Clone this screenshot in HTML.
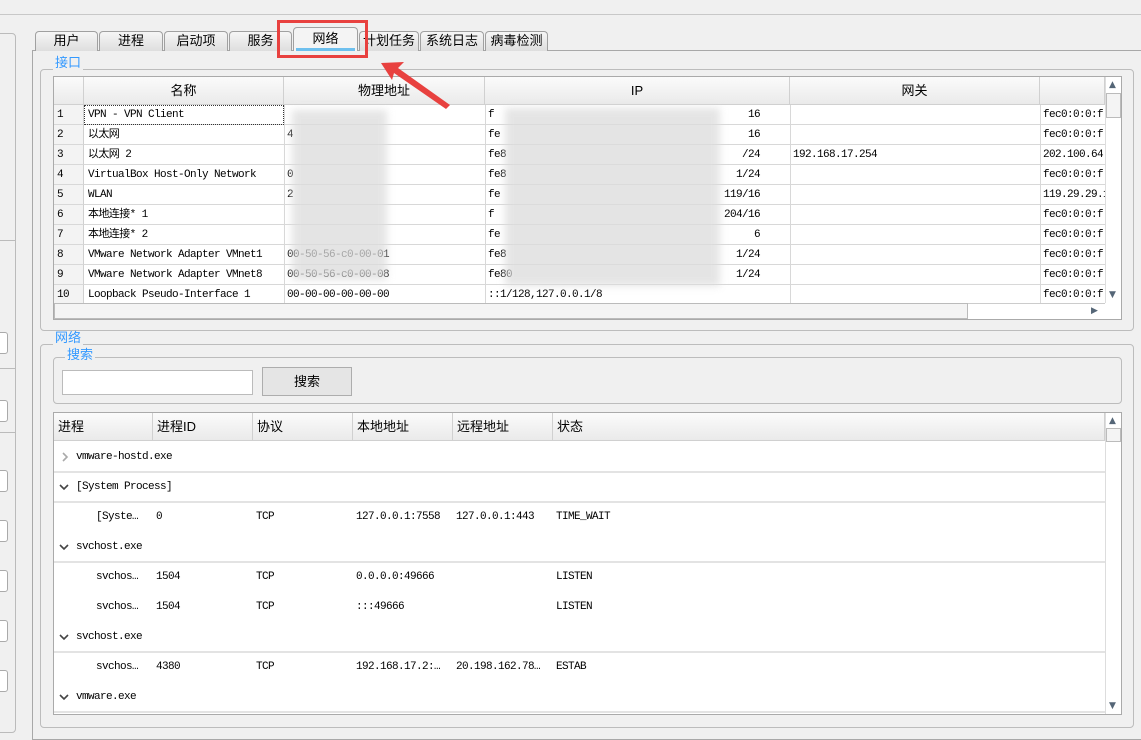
<!DOCTYPE html>
<html><head><meta charset="utf-8"><style>
*{box-sizing:border-box;margin:0;padding:0}
body{width:1141px;height:730px;background:#f0f0f0;position:relative;overflow:hidden;font-family:"Liberation Mono","Noto Sans CJK SC",monospace;font-size:12px;color:#000}
.a{position:absolute}
.t{font-family:"Liberation Sans","Noto Sans CJK SC",sans-serif;font-size:13px}
.m{font-family:"Liberation Mono","Noto Sans CJK SC",monospace;font-size:11px;letter-spacing:-0.6px;white-space:nowrap;line-height:20px;height:20px}
.tab{position:absolute;top:31px;height:20px;border:1px solid #a0a0a0;border-bottom:none;border-radius:4px 4px 0 0;background:linear-gradient(#f6f6f6,#dedede);text-align:center;line-height:18px}
.grp{position:absolute;border:1px solid #bcbcbc;border-radius:4px}
.gt{position:absolute;background:#f0f0f0;color:#3399ff;padding:0 2px;line-height:14px}
.hd{position:absolute;background:linear-gradient(#fbfbfb,#eaeaea);border-right:1px solid #d0d0d0;border-bottom:1px solid #d0d0d0;text-align:center;line-height:28px}
.bl{position:absolute;background:#dcdcdc;filter:blur(4px);opacity:.75}
.sa{position:absolute;font-size:9px;color:#567;line-height:10px;font-family:"DejaVu Sans",sans-serif}
</style></head><body>
<div class="a" style="left:0;top:14px;width:1141px;height:1px;background:#c8c8c8"></div>
<div class="a" style="left:-6px;top:33px;width:22px;height:700px;border:1px solid #bbb;border-radius:4px"></div>
<div class="a" style="left:0;top:240px;width:16px;height:1px;background:#bbb"></div>
<div class="a" style="left:0;top:368px;width:16px;height:1px;background:#bbb"></div>
<div class="a" style="left:0;top:432px;width:16px;height:1px;background:#bbb"></div>
<div class="a" style="left:-6px;top:332px;width:14px;height:22px;border:1px solid #aaa;border-radius:3px;background:#fff"></div>
<div class="a" style="left:-6px;top:400px;width:14px;height:22px;border:1px solid #aaa;border-radius:3px;background:#fff"></div>
<div class="a" style="left:-6px;top:470px;width:14px;height:22px;border:1px solid #aaa;border-radius:3px;background:#fff"></div>
<div class="a" style="left:-6px;top:520px;width:14px;height:22px;border:1px solid #aaa;border-radius:3px;background:#fff"></div>
<div class="a" style="left:-6px;top:570px;width:14px;height:22px;border:1px solid #aaa;border-radius:3px;background:#fff"></div>
<div class="a" style="left:-6px;top:620px;width:14px;height:22px;border:1px solid #aaa;border-radius:3px;background:#fff"></div>
<div class="a" style="left:-6px;top:670px;width:14px;height:22px;border:1px solid #aaa;border-radius:3px;background:#fff"></div>

<div class="a" style="left:32px;top:50px;width:1120px;height:690px;border:1px solid #a8a8a8;background:#f0f0f0"></div>
<div class="tab t" style="left:35px;width:63px">用户</div>
<div class="tab t" style="left:99px;width:64px">进程</div>
<div class="tab t" style="left:164px;width:64px">启动项</div>
<div class="tab t" style="left:229px;width:63px">服务</div>
<div class="tab t" style="left:293px;top:27px;height:24px;width:65px;background:#f4f4f4;line-height:22px">网络<div class="a" style="left:2px;right:2px;bottom:0;height:3px;background:#6ec0ee"></div></div>
<div class="tab t" style="left:359px;width:60px">计划任务</div>
<div class="tab t" style="left:420px;width:64px">系统日志</div>
<div class="tab t" style="left:485px;width:63px">病毒检测</div>

<div class="grp" style="left:40px;top:69px;width:1094px;height:262px"></div>
<div class="gt t" style="left:53px;top:56px">接口</div>
<div class="a" style="left:53px;top:76px;width:1069px;height:244px;border:1px solid #aaa;background:#fff"></div>
<div class="hd" style="left:54px;top:77px;width:30px;height:28px"></div>
<div class="hd t" style="left:84px;top:77px;width:200px;height:28px">名称</div>
<div class="hd t" style="left:284px;top:77px;width:201px;height:28px">物理地址</div>
<div class="hd t" style="left:485px;top:77px;width:305px;height:28px">IP</div>
<div class="hd t" style="left:790px;top:77px;width:250px;height:28px">网关</div>
<div class="hd" style="left:1040px;top:77px;width:65px;height:28px"></div>
<div id="rows"></div>
<div class="bl" style="left:292px;top:110px;width:95px;height:170px"></div>
<div class="bl" style="left:505px;top:108px;width:215px;height:178px"></div>
<div class="a" style="left:1105px;top:77px;width:16px;height:226px;background:#fff;border-left:1px solid #ddd"></div>
<div class="a" style="left:1106px;top:93px;width:15px;height:25px;border:1px solid #bbb;background:#f4f4f4"></div>
<div class="sa" style="left:1109px;top:80px">▲</div>
<div class="sa" style="left:1109px;top:290px">▼</div>
<div class="a" style="left:54px;top:303px;width:1051px;height:16px;background:#fff;border-top:1px solid #ccc"></div>
<div class="a" style="left:54px;top:303px;width:914px;height:16px;border:1px solid #bbb;background:#f4f4f4"></div>
<div class="sa" style="left:1091px;top:306px">▶</div>

<div class="grp" style="left:40px;top:344px;width:1094px;height:384px"></div>
<div class="gt t" style="left:53px;top:331px">网络</div>
<div class="grp" style="left:53px;top:357px;width:1069px;height:47px"></div>
<div class="gt t" style="left:65px;top:348px">搜索</div>
<div class="a" style="left:62px;top:370px;width:191px;height:25px;border:1px solid #bbb;background:#fff"></div>
<div class="a t" style="left:262px;top:367px;width:90px;height:29px;border:1px solid #adadad;background:#e5e5e5;text-align:center;line-height:27px">搜索</div>

<div class="a" style="left:53px;top:412px;width:1069px;height:303px;border:1px solid #aaa;background:#fff"></div>
<div class="hd t" style="left:54px;top:413px;width:99px;height:28px;text-align:left;padding-left:4px">进程</div>
<div class="hd t" style="left:153px;top:413px;width:100px;height:28px;text-align:left;padding-left:4px">进程ID</div>
<div class="hd t" style="left:253px;top:413px;width:100px;height:28px;text-align:left;padding-left:4px">协议</div>
<div class="hd t" style="left:353px;top:413px;width:100px;height:28px;text-align:left;padding-left:4px">本地地址</div>
<div class="hd t" style="left:453px;top:413px;width:100px;height:28px;text-align:left;padding-left:4px">远程地址</div>
<div class="hd t" style="left:553px;top:413px;width:552px;height:28px;text-align:left;padding-left:4px">状态</div>
<div class="a" style="left:1105px;top:413px;width:16px;height:301px;background:#fff;border-left:1px solid #ddd"></div>
<div class="a" style="left:1106px;top:428px;width:15px;height:14px;border:1px solid #bbb;background:#f4f4f4"></div>
<div class="sa" style="left:1109px;top:416px">▲</div>
<div class="sa" style="left:1109px;top:701px">▼</div>
<div id="tree"></div>

<div class="a" style="left:277px;top:20px;width:91px;height:38px;border:3px solid #e8413f;z-index:5"></div>
<svg class="a" style="left:370px;top:55px;z-index:5" width="85" height="55"><polygon points="11,8 34,7 28,13 80,50 76,54 24,18 22,25" fill="#e8413f"/></svg>
<script>
var r=[["1","VPN - VPN Client","","f","16","","fec0:0:0:f"],["2","以太网","4","fe","16","","fec0:0:0:f"],["3","以太网 2","","fe8","/24","192.168.17.254","202.100.64"],["4","VirtualBox Host-Only Network","0","fe8","1/24","","fec0:0:0:f"],["5","WLAN","2","fe","119/16","","119.29.29.1"],["6","本地连接* 1","","f","204/16","","fec0:0:0:f"],["7","本地连接* 2","","fe","6","","fec0:0:0:f"],["8","VMware Network Adapter VMnet1","00-50-56-c0-00-01","fe8","1/24","","fec0:0:0:f"],["9","VMware Network Adapter VMnet8","00-50-56-c0-00-08","fe80","1/24","","fec0:0:0:f"],["10","Loopback Pseudo-Interface 1","00-00-00-00-00-00","::1/128,127.0.0.1/8","","","fec0:0:0:f"]];
var h="";
r.forEach(function(x,i){var y=105+i*20;
h+='<div class="a" style="left:54px;top:'+y+'px;width:30px;height:20px;background:#f3f3f3;border-right:1px solid #d0d0d0;border-bottom:1px solid #d8d8d8"></div>';
h+='<div class="a" style="left:84px;top:'+(y+19)+'px;width:1021px;height:1px;background:#d8d8d8"></div>';
[284,485,790,1040].forEach(function(c){h+='<div class="a" style="left:'+c+'px;top:'+y+'px;width:1px;height:20px;background:#d8d8d8"></div>'});
h+='<div class="a m" style="left:57px;top:'+y+'px">'+x[0]+'</div>';
h+='<div class="a m" style="left:88px;top:'+y+'px;width:195px;overflow:hidden">'+x[1]+'</div>';
h+='<div class="a m" style="left:287px;top:'+y+'px">'+x[2]+'</div>';
h+='<div class="a m" style="left:488px;top:'+y+'px">'+x[3]+'</div>';
if(x[4])h+='<div class="a m" style="left:'+(760-x[4].length*6)+'px;top:'+y+'px">'+x[4]+'</div>';
h+='<div class="a m" style="left:793px;top:'+y+'px">'+x[5]+'</div>';
h+='<div class="a m" style="left:1043px;top:'+y+'px;width:62px;overflow:hidden">'+x[6]+'</div>';
});
h+='<div class="a" style="left:84px;top:105px;width:200px;height:20px;border:1px dotted #333"></div>';
document.getElementById("rows").innerHTML=h;
var t=[[0,0,"vmware-hostd.exe"],[0,1,"[System Process]"],[1,"[Syste…","0","TCP","127.0.0.1:7558","127.0.0.1:443","TIME_WAIT"],[0,1,"svchost.exe"],[1,"svchos…","1504","TCP","0.0.0.0:49666","","LISTEN"],[1,"svchos…","1504","TCP",":::49666","","LISTEN"],[0,1,"svchost.exe"],[1,"svchos…","4380","TCP","192.168.17.2:…","20.198.162.78…","ESTAB"],[0,1,"vmware.exe"]];
h="";
t.forEach(function(x,i){var y=442+i*30;
if(x[0]==0){
if(x[1]==0)h+='<svg class="a" style="left:60px;top:'+(y+10)+'px" width="10" height="10"><path d="M3,1 L7,5 L3,9" stroke="#aaa" stroke-width="1.6" fill="none"/></svg>';
else h+='<svg class="a" style="left:59px;top:'+(y+10)+'px" width="10" height="10"><path d="M1,3 L5,7 L9,3" stroke="#444" stroke-width="1.6" fill="none"/></svg>';
h+='<div class="a m" style="left:76px;top:'+(y+5)+'px">'+x[2]+'</div>';
h+='<div class="a" style="left:54px;top:'+(y+29)+'px;width:1051px;height:2px;background:#e3e3e3"></div>';}
else{[[96,1],[156,2],[256,3],[356,4],[456,5],[556,6]].forEach(function(c){h+='<div class="a m" style="left:'+c[0]+'px;top:'+(y+5)+'px">'+x[c[1]]+'</div>'});}
});
document.getElementById("tree").innerHTML=h;
</script>
</body></html>
